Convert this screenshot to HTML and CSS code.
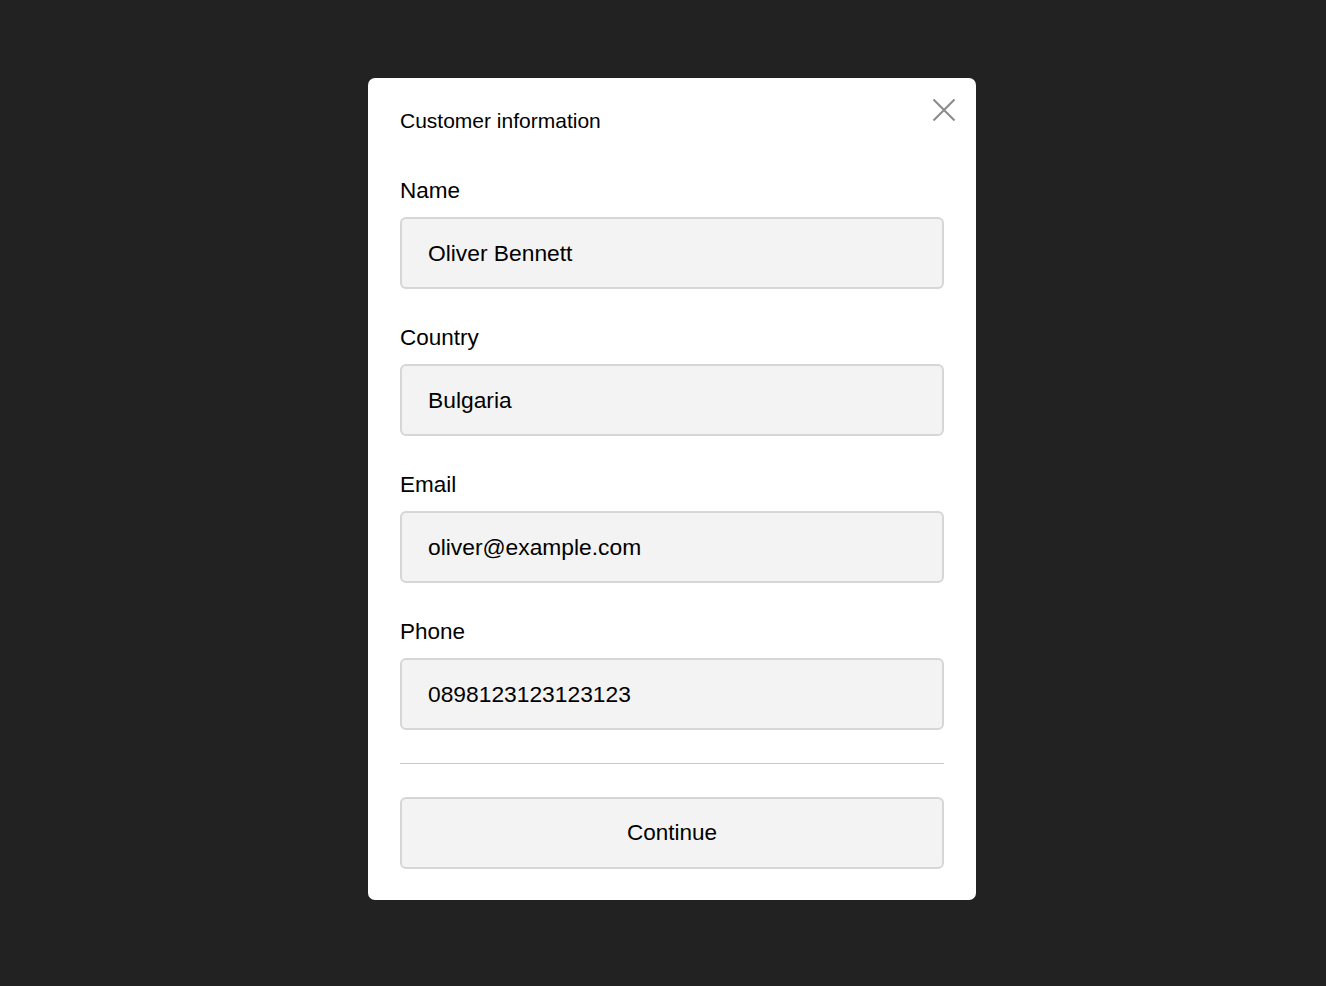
FILE: index.html
```html
<!DOCTYPE html>
<html lang="en">
<head>
<meta charset="utf-8">
<title>Customer information</title>
<link rel="stylesheet" href="styles.css">
</head>
<body>
<div class="page">
  <div class="modal">
    <button class="close" aria-label="Close">
      <svg width="24" height="24" viewBox="0 0 24 24"><path d="M1.5 1.5 L22.5 22.5 M22.5 1.5 L1.5 22.5" stroke="#8a8a8a" stroke-width="2" fill="none"/></svg>
    </button>
    <h2 class="title">Customer information</h2>
    <div class="field">
      <label class="label">Name</label>
      <input class="input" type="text" value="Oliver Bennett">
    </div>
    <div class="field">
      <label class="label">Country</label>
      <input class="input" type="text" value="Bulgaria">
    </div>
    <div class="field">
      <label class="label">Email</label>
      <input class="input" type="text" value="oliver@example.com">
    </div>
    <div class="field">
      <label class="label">Phone</label>
      <input class="input" type="text" value="0898123123123123">
    </div>
    <hr class="divider">
    <button class="continue">Continue</button>
  </div>
</div>
</body>
</html>
```

FILE: styles.css
```css
html, body {
  margin: 0;
  padding: 0;
  background: #222222;
  font-family: "Liberation Sans", Arial, Helvetica, sans-serif;
  color: #000;
}
.page {
  min-height: 986px;
  box-sizing: border-box;
  padding: 78px 0 0 368px;
  display: flex;
  align-items: flex-start;
}
.modal {
  position: relative;
  width: 608px;
  box-sizing: border-box;
  background: #ffffff;
  border-radius: 7px;
  padding: 32px 32px 31px;
  display: flex;
  flex-direction: column;
}
.close {
  position: absolute;
  top: 20px;
  right: 20px;
  background: none;
  border: 0;
  padding: 0;
  width: 24px;
  height: 24px;
  cursor: pointer;
}
.close svg { display: block; }
.title {
  margin: 0 0 46px;
  font-size: 21px;
  line-height: 22px;
  font-weight: 400;
}
.field {
  display: flex;
  flex-direction: column;
  margin-bottom: 36px;
}
.field:last-of-type { margin-bottom: 0; }
.label {
  font-size: 22.5px;
  line-height: 26px;
  margin-bottom: 13px;
}
.input {
  box-sizing: border-box;
  width: 544px;
  height: 72px;
  margin: 0;
  padding: 0 26px;
  background: #f3f3f3;
  border: 2px solid #d6d6d6;
  border-radius: 6px;
  font-family: inherit;
  font-size: 22.8px;
  color: #000;
  outline: none;
}
.divider {
  margin: 33px 0 33px;
  border: 0;
  height: 1px;
  background: #c9c9c9;
}
.continue {
  box-sizing: border-box;
  width: 544px;
  height: 72px;
  background: #f3f3f3;
  border: 2px solid #d6d6d6;
  border-radius: 6px;
  font-family: inherit;
  font-size: 22.5px;
  color: #000;
  padding: 0;
  cursor: pointer;
}
```
